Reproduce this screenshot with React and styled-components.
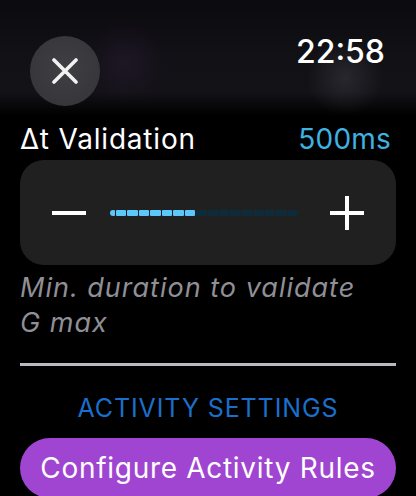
import React from "react";
import styled, { createGlobalStyle } from "styled-components";

const Global = createGlobalStyle`
  html, body { margin: 0; padding: 0; background: #000; }
  body { font-family: Inter, "Liberation Sans", sans-serif; color: #fff; overflow: hidden; }
`;

const Screen = styled.div`
  width: 416px;
  height: 496px;
  overflow: hidden;
  background: #000;
  display: flex;
  flex-direction: column;
`;

const Header = styled.header`
  height: 123px;
  flex: none;
  display: flex;
  justify-content: space-between;
  align-items: flex-start;
  padding: 0 31px 0 30px;
  box-sizing: border-box;
  background:
    radial-gradient(circle at 125px 62px, rgba(70, 40, 90, 0.22) 0, rgba(70, 40, 90, 0) 42px),
    radial-gradient(circle at 345px 78px, rgba(80, 80, 88, 0.35) 0, rgba(80, 80, 88, 0) 38px),
    linear-gradient(to bottom, #0b0a0e 0px, #121116 60px, #131217 92px, #000 116px, #000 123px);
`;

const CloseButton = styled.button`
  margin-top: 36px;
  width: 70px;
  height: 70px;
  border-radius: 50%;
  border: none;
  padding: 0;
  background: radial-gradient(circle at 50% 45%, #403f44 0, #37363b 70%);
  display: flex;
  align-items: center;
  justify-content: center;
`;

const Time = styled.div`
  margin-top: 35px;
  font-size: 32px;
  line-height: 33px;
  font-weight: 500;
  color: #fff;
`;

const Content = styled.main`
  padding: 0 20px;
  display: flex;
  flex-direction: column;
`;

const TitleRow = styled.div`
  display: flex;
  justify-content: space-between;
  align-items: baseline;
  height: 32px;
  line-height: 32px;
  font-size: 28px;
  padding-right: 5px;
`;

const Title = styled.span`
  color: #fff;
  letter-spacing: 0.8px;
`;

const Value = styled.span`
  color: #3eb2e0;
  letter-spacing: 0.2px;
`;

const Stepper = styled.div`
  margin-top: 5px;
  height: 105px;
  border-radius: 24px;
  background: #202020;
  display: flex;
  align-items: center;
  padding: 0 32px;
`;

const Sign = styled.div`
  position: relative;
  width: 34px;
  height: 34px;
  flex: none;
  &::before {
    content: "";
    position: absolute;
    left: 0;
    right: 0;
    top: 15px;
    height: 4px;
    background: #fff;
  }
  &::after {
    content: "";
    display: ${(p) => (p.$plus ? "block" : "none")};
    position: absolute;
    top: 0;
    bottom: 0;
    left: 15px;
    width: 4px;
    background: #fff;
  }
`;

const Track = styled.div`
  flex: 1;
  margin: 0 32px 0 24px;
  height: 6px;
  display: flex;
  gap: 1px;
`;

const Segment = styled.div`
  flex: ${(p) => (p.$dot ? "none" : "1")};
  width: ${(p) => (p.$dot ? "5px" : "auto")};
  height: 6px;
  border-radius: ${(p) => (p.$dot ? "3px 1px 1px 3px" : p.$last ? "1px 3px 3px 1px" : "1px")};
  background: ${(p) => (p.$on ? "#5ac8fa" : "#0e2b39")};
`;

const Caption = styled.p`
  margin: 5px 0 0;
  font-size: 27px;
  line-height: 35px;
  font-style: italic;
  letter-spacing: 1px;
  color: #8f8f95;
`;

const Divider = styled.hr`
  margin: 23px 0 0;
  border: none;
  height: 3px;
  background: #b9babf;
`;

const SectionLabel = styled.div`
  margin-top: 27px;
  text-align: center;
  font-size: 25px;
  line-height: 30px;
  letter-spacing: 0.9px;
  color: #1b6fcc;
`;

const ActionButton = styled.button`
  margin-top: 15px;
  height: 60px;
  border: none;
  border-radius: 30px;
  background: #a045d1;
  color: #fff;
  font-family: Inter, "Liberation Sans", sans-serif;
  font-size: 28px;
  line-height: 32px;
  letter-spacing: 0.7px;
  padding: 0;
`;

const SEGMENTS = 16;
const ON = 7;

export default function App() {
  return (
    <Screen>
      <Global />
      <Header>
        <CloseButton aria-label="Close">
          <svg width="26" height="26" viewBox="0 0 26 26">
            <path d="M2 2 L24 24 M24 2 L2 24" stroke="#f2f2f2" strokeWidth="3.6" strokeLinecap="round" />
          </svg>
        </CloseButton>
        <Time>22:58</Time>
      </Header>
      <Content>
        <TitleRow>
          <Title>Δt Validation</Title>
          <Value>500ms</Value>
        </TitleRow>
        <Stepper>
          <Sign />
          <Track>
            <Segment $dot $on />
            {Array.from({ length: SEGMENTS }).map((_, i) => (
              <Segment key={i} $on={i < ON} $last={i === SEGMENTS - 1} />
            ))}
          </Track>
          <Sign $plus />
        </Stepper>
        <Caption>
          Min. duration to validate
          <br />G max
        </Caption>
        <Divider />
        <SectionLabel>ACTIVITY SETTINGS</SectionLabel>
        <ActionButton>Configure Activity Rules</ActionButton>
      </Content>
    </Screen>
  );
}
